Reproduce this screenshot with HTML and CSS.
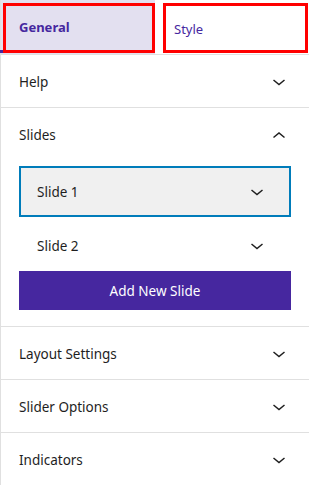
FILE: index.html
```html
<!DOCTYPE html>
<html lang="en">
  <head>
    <meta charset="utf-8">
    <title>Slider Settings</title>
    <link rel="stylesheet" href="styles.css">
  </head>
  <body>
    <div class="panel">
      <div class="tabs">
        <div class="tab active"><span class="tablabel">General</span></div>
        <div class="tab"><span class="tablabel">Style</span></div>
      </div>

      <div class="section">
        <div class="sectionhead">
          <span>Help</span>
          <svg class="chev" viewBox="0 0 24 24"><polyline points="6.5,10 12,14.5 17.5,10"/></svg>
        </div>
      </div>

      <div class="section">
        <div class="sectionhead">
          <span>Slides</span>
          <svg class="chev" viewBox="0 0 24 24"><polyline points="6.5,14.5 12,10 17.5,14.5"/></svg>
        </div>
        <div class="sectionbody">
          <div class="slide selected">
            <span>Slide 1</span>
            <svg class="chev" viewBox="0 0 24 24"><polyline points="6.5,10 12,14.5 17.5,10"/></svg>
          </div>
          <div class="slide">
            <span>Slide 2</span>
            <svg class="chev" viewBox="0 0 24 24"><polyline points="6.5,10 12,14.5 17.5,10"/></svg>
          </div>
          <button type="button" class="addslide">Add New Slide</button>
        </div>
      </div>

      <div class="section">
        <div class="sectionhead">
          <span>Layout Settings</span>
          <svg class="chev" viewBox="0 0 24 24"><polyline points="6.5,10 12,14.5 17.5,10"/></svg>
        </div>
      </div>

      <div class="section">
        <div class="sectionhead">
          <span>Slider Options</span>
          <svg class="chev" viewBox="0 0 24 24"><polyline points="6.5,10 12,14.5 17.5,10"/></svg>
        </div>
      </div>

      <div class="section last">
        <div class="sectionhead">
          <span>Indicators</span>
          <svg class="chev" viewBox="0 0 24 24"><polyline points="6.5,10 12,14.5 17.5,10"/></svg>
        </div>
      </div>
    </div>
  </body>
</html>
```

FILE: styles.css
```css
*{
  padding: 0px;
  margin: 0px;
  box-sizing: border-box;
}

:root{
  --purple: #46279f;
  --lavender: #e3e0f0;
  --red: #ff0000;
  --line: #e0e0e0;
  --text: #1e1e1e;
  --blue: #007cba;
}

body{
  font-family: "Noto Sans", "Open Sans", sans-serif;
  font-size: 13.5px;
  color: var(--text);
  background: white;
}

.panel{
  border-left: 1px solid var(--line);
  min-height: 485px;
}

.tabs{
  display: flex;
  height: 55px;
  border-bottom: 1px solid var(--line);
}

.tab{
  display: flex;
  height: 54px;
  padding: 3px 1px 1px 8px;
}

.tab:last-child{
  flex-grow: 1;
}

.tab.active{
  width: 154px;
  padding: 3px 0px 1px 2px;
  background-color: var(--lavender);
  position: relative;
}

.tab.active::after{
  content: "";
  position: absolute;
  left: -1px;
  bottom: 1px;
  width: 3px;
  height: 3px;
  background-color: var(--purple);
}

.tablabel{
  flex-grow: 1;
  display: flex;
  align-items: center;
  padding-left: 8px;
  border: 3px solid var(--red);
  color: var(--purple);
  font-size: 13px;
}

.tab.active .tablabel{
  font-weight: 700;
  padding-left: 13px;
  padding-bottom: 3px;
}

.tab:last-child .tablabel{
  padding-top: 1px;
}

.section{
  border-bottom: 1px solid var(--line);
}

.section.last{
  border-bottom: none;
}

.sectionhead{
  display: flex;
  align-items: center;
  justify-content: space-between;
  height: 52px;
  padding: 2px 18px 0px 18px;
}

.chev{
  width: 24px;
  height: 24px;
  fill: none;
  stroke: var(--text);
  stroke-width: 1.5;
}

.sectionbody{
  padding: 6px 18px 16px 18px;
}

.slide{
  display: flex;
  align-items: center;
  justify-content: space-between;
  height: 52px;
  padding: 0px 20px 0px 16px;
  border: 2px solid transparent;
}

.slide.selected{
  height: 51px;
  border-color: var(--blue);
  background-color: #f0f0f0;
}

.slide:not(.selected){
  height: 54px;
  padding-top: 4px;
}

.addslide{
  display: block;
  width: 100%;
  height: 39px;
  border: none;
  background-color: var(--purple);
  color: white;
  font-family: "Noto Sans", "Open Sans", sans-serif;
  font-size: 13.5px;
}
```
